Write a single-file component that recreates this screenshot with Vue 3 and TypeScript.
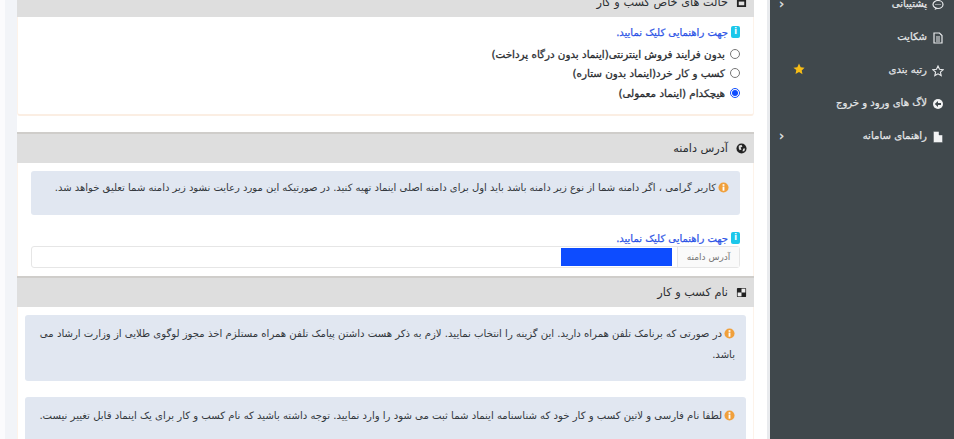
<script setup lang="ts">
interface NavItem { label: string; icon: string; chevron?: boolean; star?: boolean }
const nav: NavItem[] = [
  { label: 'پشتیبانی', icon: 'chat', chevron: true },
  { label: 'شکایت', icon: 'doc' },
  { label: 'رتبه بندی', icon: 'star', star: true },
  { label: 'لاگ های ورود و خروج', icon: 'back' },
  { label: 'راهنمای سامانه', icon: 'file', chevron: true },
]
const options = [
  { label: 'بدون فرایند فروش اینترنتی(اینماد بدون درگاه پرداخت)', checked: false },
  { label: 'کسب و کار خرد(اینماد بدون ستاره)', checked: false },
  { label: 'هیچکدام (اینماد معمولی)', checked: true },
]
</script>

<template>
  <div class="page" dir="rtl">
    <aside class="sidebar">
      <div v-for="item in nav" :key="item.label" class="nav-item">
        <svg class="nav-icon" viewBox="0 0 12 12">
          <template v-if="item.icon === 'chat'">
            <ellipse cx="6" cy="5.5" rx="5" ry="4" fill="none" stroke="#e8eaec" stroke-width="1.2" />
            <path d="M3.5 9 L2.5 11 L6 9.5Z" fill="#e8eaec" />
            <path d="M3.5 5.5h5" stroke="#e8eaec" stroke-dasharray="1 1" />
          </template>
          <template v-else-if="item.icon === 'doc'">
            <path d="M2 1h5.5L10 3.5V11H2Z" fill="none" stroke="#e8eaec" stroke-width="1.2" />
            <path d="M4 5h4M4 7h4M4 9h4" stroke="#e8eaec" />
          </template>
          <path v-else-if="item.icon === 'star'" d="M6 1l1.5 3.3 3.6.4-2.7 2.4.8 3.5L6 8.8l-3.2 1.8.8-3.5L.9 4.7l3.6-.4Z" fill="none" stroke="#e8eaec" stroke-width="1.1" />
          <template v-else-if="item.icon === 'back'">
            <circle cx="6" cy="6" r="5" fill="#f2f3f4" />
            <path d="M9 5H6V3L2.8 6 6 9V7h3Z" fill="#3f474b" />
          </template>
          <path v-else d="M1.5 .5h5.5l3.5 3.5v7.500H1.500Z M7 .5v3.500h3.500" fill="#f2f3f4" stroke="#3f474b" stroke-width=".4" />
        </svg>
        <span class="nav-label">{{ item.label }}</span>
        <svg v-if="item.star" class="nav-star" viewBox="0 0 12 12">
          <path d="M6 .6l1.700 3.600 3.900.5-2.900 2.700.8 3.900L6 9l-3.500 1.900.8-3.900L.4 4.700l3.900-.5Z" fill="#f7bd16" />
        </svg>
        <span v-if="item.chevron" class="nav-chevron">‹</span>
      </div>
    </aside>

    <div class="gutter"></div>

    <main class="content">
      <section class="card card-top">
        <header class="card-head">
          <svg class="head-icon" viewBox="0 0 12 12"><path d="M4 3V1.500h4V3h3v8H1V3Z M5 3h2V2.500H5Z" fill="#222" fill-rule="evenodd" /><rect x="3" y="5" width="6" height="4" fill="#e0e0e0" /></svg>
          <span>حالت های خاص کسب و کار</span>
        </header>
        <div class="card-body special">
          <div class="help help-first"><span class="help-badge">i</span><span>جهت راهنمایی کلیک نمایید.</span></div>
          <label v-for="o in options" :key="o.label" class="option">
            <input type="radio" name="kind" :checked="o.checked" />
            <span>{{ o.label }}</span>
          </label>
        </div>
      </section>

      <section class="card card-domain">
        <header class="card-head">
          <svg class="head-icon" viewBox="0 0 12 12"><circle cx="6" cy="6" r="5.500" fill="#222" /><path d="M3 3l3-1 1 2-2 1 1 2-2 1-1-2Z M8 6l2 0-1 3-2 0Z" fill="#ddd" /></svg>
          <span>آدرس دامنه</span>
        </header>
        <div class="card-body domain">
          <div class="alert alert-domain">
            <svg class="info" viewBox="0 0 12 12"><circle cx="6" cy="6" r="5.500" fill="#f0a03c" /><rect x="5" y="5" width="2" height="4.500" fill="#fff" /><rect x="5" y="2.400" width="2" height="1.800" fill="#fff" /></svg>
            <span>کاربر گرامی ، اگر دامنه شما از نوع زیر دامنه باشد باید اول برای دامنه اصلی اینماد تهیه کنید. در صورتیکه این مورد رعایت نشود زیر دامنه شما تعلیق خواهد شد.</span>
          </div>
          <div class="help help-domain"><span class="help-badge">i</span><span>جهت راهنمایی کلیک نمایید.</span></div>
          <div class="input-group">
            <span class="addon">آدرس دامنه</span>
            <div class="field"><span class="selection"></span></div>
          </div>
        </div>
      </section>

      <section class="card card-name">
        <header class="card-head">
          <svg class="head-icon" viewBox="0 0 12 12"><rect x="1" y="1" width="10" height="10" rx="1" fill="#222" /><rect x="6" y="1.800" width="4.200" height="4.200" fill="#eee" /><rect x="1.800" y="6" width="4.200" height="4.200" fill="#eee" /></svg>
          <span>نام کسب و کار</span>
        </header>
        <div class="card-body name">
          <div class="alert alert-name">
            <svg class="info" viewBox="0 0 12 12"><circle cx="6" cy="6" r="5.500" fill="#f0a03c" /><rect x="5" y="5" width="2" height="4.500" fill="#fff" /><rect x="5" y="2.400" width="2" height="1.800" fill="#fff" /></svg>
            <span>در صورتی که برنامک تلفن همراه دارید. این گزینه را انتخاب نمایید. لازم به ذکر هست داشتن پیامک تلفن همراه مستلزم اخذ مجوز لوگوی طلایی از وزارت ارشاد می باشد.</span>
          </div>
          <div class="alert alert-name">
            <svg class="info" viewBox="0 0 12 12"><circle cx="6" cy="6" r="5.500" fill="#f0a03c" /><rect x="5" y="5" width="2" height="4.500" fill="#fff" /><rect x="5" y="2.400" width="2" height="1.800" fill="#fff" /></svg>
            <span>لطفا نام فارسی و لاتین کسب و کار خود که شناسنامه اینماد شما ثبت می شود را وارد نمایید. توجه داشته باشید که نام کسب و کار برای یک اینماد قابل تغییر نیست.</span>
          </div>
        </div>
      </section>
    </main>

    <div class="left-strip"></div>
  </div>
</template>

<style scoped>
.page {
  display: flex;
  width: 954px;
  height: 439px;
  overflow: hidden;
  background: #fff;
  font-family: "DejaVu Sans", "Noto Sans", sans-serif;
  font-size: 10px;
  color: #30363b;
}
.sidebar {
  flex: 0 0 184px;
  background: #40484c;
  margin-top: -12px;
}
.nav-item {
  display: flex;
  align-items: center;
  height: 33px;
  padding-right: 10px;
  color: #e4e6e8;
  font-size: 10.1px;
  -webkit-text-stroke: 0.25px #e4e6e8;
  position: relative;
}
.nav-label { position: relative; top: -1px; }
.nav-icon { width: 12px; height: 12px; margin-left: 5px; flex: none; }
.nav-star { position: absolute; left: 23px; top: 9px; width: 12px; height: 12px; }
.nav-chevron { position: absolute; left: 9px; top: 8px; font-size: 13px; color: #e4e6e8; }
.gutter {
  flex: 0 0 16px;
  background: #fff;
  border-right: 3px solid #e9ebee;
  box-sizing: border-box;
}
.content {
  flex: 0 0 737px;
  overflow: hidden;
  margin-top: -14px;
}
.left-strip { flex: 1; background: #f2f4f8; border-left: 5px solid #fbfbfd; }
.card { background: #fff; }
.card-head {
  display: flex;
  align-items: center;
  height: 31px;
  box-sizing: border-box;
  padding-right: 7px;
  background: #dedede;
  border-top: 2px solid #cfcdca;
  font-size: 11.3px;
  color: #2c2f33;
}
.head-icon { width: 11px; height: 11px; margin-left: 8px; flex: none; }
.card-body {
  border-left: 1px solid #fdf3ea;
  border-right: 1px solid #fdf3ea;
}
.special {
  height: 99px;
  box-sizing: border-box;
  padding: 8px 13px 0 0;
  border-bottom: 2px solid #fbeee3;
  border-radius: 0 0 3px 3px;
}
.card-top { margin-bottom: 16px; }
.help {
  display: flex;
  align-items: center;
  gap: 3px;
  color: #2e55e6;
  font-size: 10px;
  -webkit-text-stroke: 0.25px #2e55e6;
}
.help-first { height: 14px; margin-bottom: 5px; }
.help-badge {
  width: 9px;
  height: 12px;
  background: #1cc7ea;
  border-radius: 2px;
  color: #fff;
  font-size: 8px;
  font-weight: 700;
  line-height: 12px;
  text-align: center;
  -webkit-text-stroke: 0;
}
.option {
  display: flex;
  align-items: center;
  height: 19.5px;
  font-size: 10.35px;
  color: #2a2d31;
  -webkit-text-stroke: 0.3px #2a2d31;
}
.option input {
  width: 10px;
  height: 10px;
  margin: 0 0 0 5px;
  accent-color: #0d4cff;
}
.domain {
  height: 113px;
  box-sizing: border-box;
  padding: 8px 13px 0;
}
.alert {
  box-sizing: border-box;
  background: #e1e7f1;
  border-radius: 3px;
  color: #33383d;
  font-size: 10px;
  line-height: 24px;
}
.info { width: 11px; height: 11px; margin-left: 2px; vertical-align: -2px; }
.alert-domain {
  height: 44px;
  padding: 5px 11px 0;
}
.help-domain { height: 14px; margin-top: 16px; }
.input-group {
  display: flex;
  height: 22px;
  margin-top: 1px;
  border: 1px solid #e6e6e6;
  border-radius: 3px;
  box-sizing: border-box;
}
.addon {
  flex: 0 0 61px;
  background: #fafafa;
  border-left: 1px solid #e6e6e6;
  color: #777;
  font-size: 9px;
  line-height: 20px;
  text-align: center;
}
.field { flex: 1; padding: 1px 5px 1px 0; }
.selection { display: block; width: 111px; height: 18px; background: #0d4cff; }
.name {
  padding: 8px 7px 0;
  height: 160px;
  box-sizing: border-box;
}
.alert-name {
  padding: 8px 11px 0;
  height: 66px;
  margin-bottom: 16px;
  font-size: 10.1px;
  line-height: 21px;
}
</style>
